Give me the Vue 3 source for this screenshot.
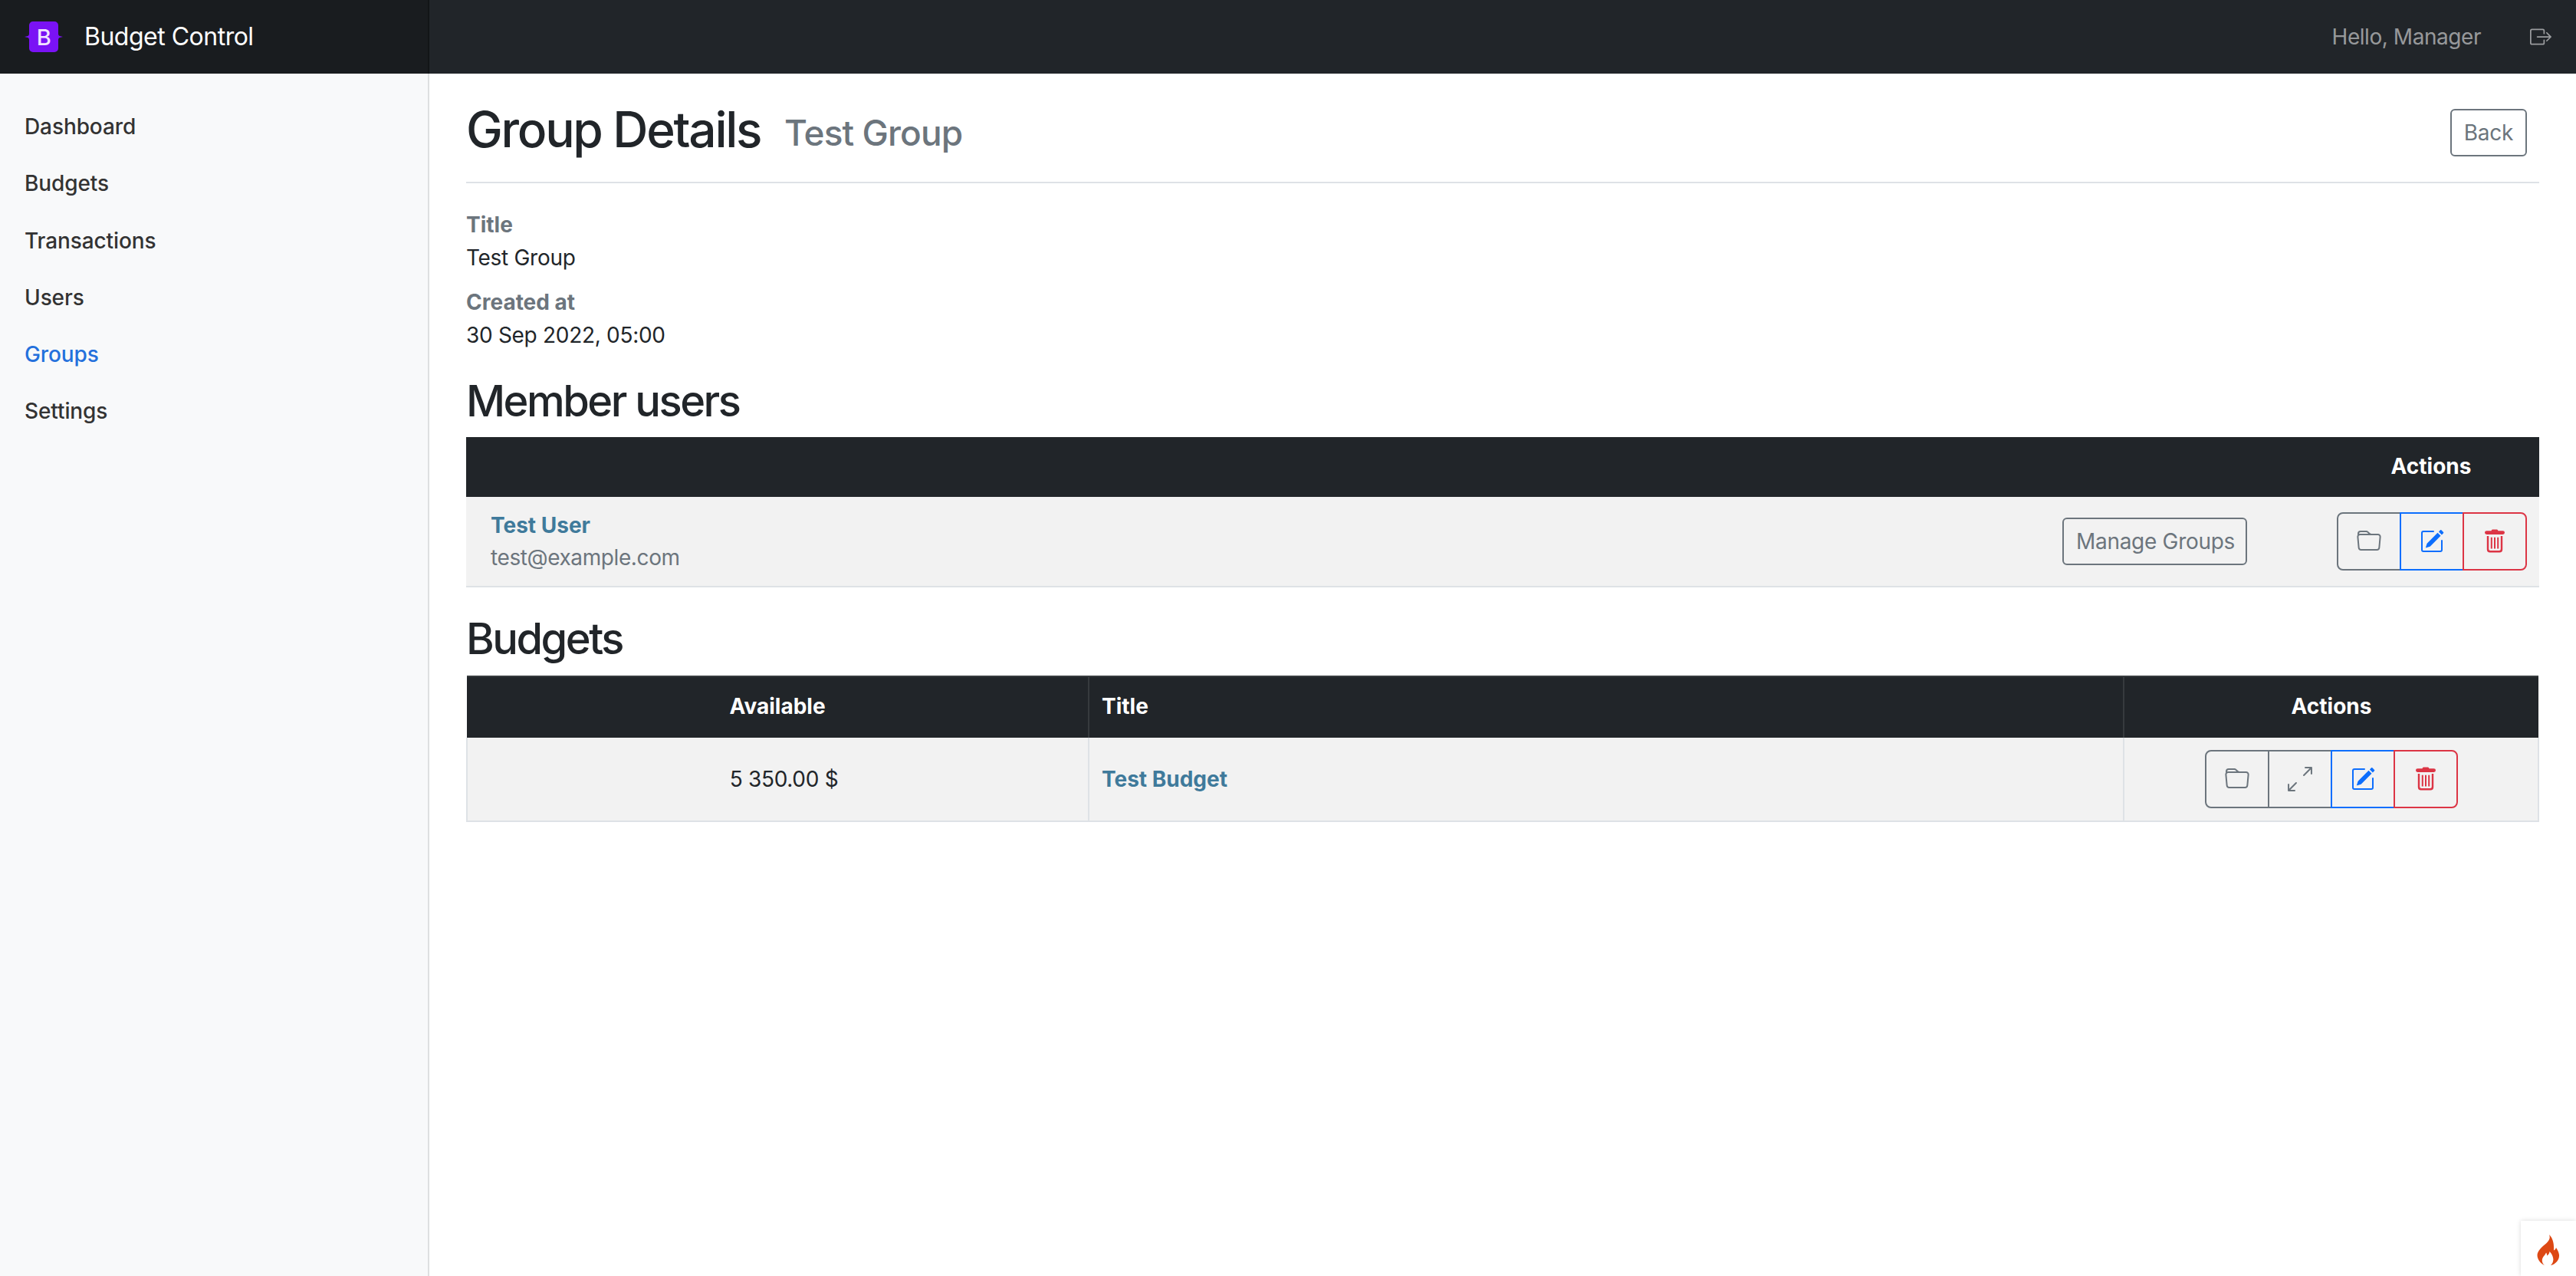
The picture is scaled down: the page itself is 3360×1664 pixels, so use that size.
<script setup>
const navItems = [
  { label: 'Dashboard' },
  { label: 'Budgets' },
  { label: 'Transactions' },
  { label: 'Users' },
  { label: 'Groups', active: true },
  { label: 'Settings' },
]
const folder = 'M.54 3.87.5 3a2 2 0 0 1 2-2h3.672a2 2 0 0 1 1.414.586l.828.828A2 2 0 0 0 9.828 3h3.982a2 2 0 0 1 1.992 2.181l-.637 7A2 2 0 0 1 13.174 14H2.826a2 2 0 0 1-1.991-1.819l-.637-7a1.99 1.99 0 0 1 .342-1.31zM2.19 4a1 1 0 0 0-.996 1.09l.637 7a1 1 0 0 0 .995.91h10.348a1 1 0 0 0 .995-.91l.637-7A1 1 0 0 0 13.81 4H2.19zm4.69-1.707A1 1 0 0 0 6.172 2H2.5a1 1 0 0 0-1 .981l.006.139C1.72 3.042 1.95 3 2.19 3h5.396l-.707-.707z'
const expand = 'M5.828 10.172a.5.5 0 0 0-.707 0l-4.096 4.096V11.5a.5.5 0 0 0-1 0v3.975a.5.5 0 0 0 .5.5H4.5a.5.5 0 0 0 0-1H1.732l4.096-4.096a.5.5 0 0 0 0-.707zm4.344-4.344a.5.5 0 0 0 .707 0l4.096-4.096V4.5a.5.5 0 1 0 1 0V.525a.5.5 0 0 0-.5-.5H11.5a.5.5 0 0 0 0 1h2.768l-4.096 4.096a.5.5 0 0 0 0 .707z'
const pencil = 'M15.502 1.94a.5.5 0 0 1 0 .706L14.459 3.69l-2-2L13.502.646a.5.5 0 0 1 .707 0l1.293 1.293zm-1.75 2.456-2-2L4.939 9.21a.5.5 0 0 0-.121.196l-.805 2.414a.25.25 0 0 0 .316.316l2.414-.805a.5.5 0 0 0 .196-.12l6.813-6.814zM1 13.5A1.5 1.5 0 0 0 2.5 15h11a1.5 1.5 0 0 0 1.5-1.5v-6a.5.5 0 0 0-1 0v6a.5.5 0 0 1-.5.5h-11a.5.5 0 0 1-.5-.5v-11a.5.5 0 0 1 .5-.5H9a.5.5 0 0 0 0-1H2.5A1.5 1.5 0 0 0 1 2.5v11z'
const trash = 'M6.6 .3h2.800a.8.8 0 0 1 .8.8h3.100a1.100 1.100 0 0 1 0 2.400H2.700a1.100 1.100 0 0 1 0-2.400h3.100a.8.8 0 0 1 .8-.8zM2.900 4.500h1.200v8.500a1 1 0 0 0 1 1h5.800a1 1 0 0 0 1-1V4.500h1.200v8.800a2 2 0 0 1-2 2H4.900a2 2 0 0 1-2-2zM5.400 5.400h1v7.400h-1zM7.500 5.400h1v7.400h-1zM9.600 5.400h1v7.400h-1z'
const memberActions = [
  { d: folder, tone: 'grey' },
  { d: pencil, tone: 'blue' },
  { d: trash, tone: 'red' },
]
const budgetActions = [
  { d: folder, tone: 'grey' },
  { d: expand, tone: 'grey' },
  { d: pencil, tone: 'blue' },
  { d: trash, tone: 'red' },
]
</script>

<template>
  <div class="page">
    <header class="topbar">
      <div class="brand">
        <svg class="logo" viewBox="0 0 50 40" aria-hidden="true">
          <path d="M6 5a5 5 0 0 1 5-5h28a5 5 0 0 1 5 5v11c0 2 1 3 3 3.300l3 .7-3 .7c-2 .3-3 1.300-3 3.300v11a5 5 0 0 1-5 5H11a5 5 0 0 1-5-5V24c0-2-1-3-3-3.300L0 20l3-.7c2-.3 3-1.300 3-3.300z" fill="#7a12f5" />
          <text x="25" y="30.500" text-anchor="middle" class="logo-b">B</text>
        </svg>
        <span>Budget Control</span>
      </div>
      <div class="userbox">
        <span class="hello">Hello, Manager</span>
        <svg class="logout" viewBox="0 0 16 16" fill="currentColor" aria-hidden="true">
          <path d="M10 12.5a.5.5 0 0 1-.5.5h-8a.5.5 0 0 1-.5-.5v-9a.5.5 0 0 1 .5-.5h8a.5.5 0 0 1 .5.5v2a.5.5 0 0 0 1 0v-2A1.5 1.5 0 0 0 9.500 2h-8A1.5 1.5 0 0 0 0 3.500v9A1.5 1.5 0 0 0 1.500 14h8a1.5 1.5 0 0 0 1.500-1.500v-2a.5.5 0 0 0-1 0v2z" />
          <path d="M15.854 8.354a.5.5 0 0 0 0-.708l-3-3a.5.5 0 0 0-.708.708L14.293 7.500H5.500a.5.5 0 0 0 0 1h8.793l-2.147 2.146a.5.5 0 0 0 .708.708l3-3z" />
        </svg>
      </div>
    </header>

    <div class="body">
      <nav class="sidebar">
        <a v-for="item in navItems" :key="item.label" class="nav-link" :class="{ active: item.active }">{{ item.label }}</a>
      </nav>

      <main class="content">
        <div class="title-row">
          <h1>Group Details <small>Test Group</small></h1>
          <button class="btn back">Back</button>
        </div>

        <dl class="details">
          <div class="detail">
            <dt>Title</dt>
            <dd>Test Group</dd>
          </div>
          <div class="detail">
            <dt>Created at</dt>
            <dd>30 Sep 2022, 05:00</dd>
          </div>
        </dl>

        <h2>Member users</h2>
        <table class="grid members">
          <thead>
            <tr>
              <th></th>
              <th class="c-manage"></th>
              <th class="c-actions">Actions</th>
            </tr>
          </thead>
          <tbody>
            <tr>
              <td class="who">
                <a class="link">Test User</a>
                <div class="muted">test@example.com</div>
              </td>
              <td class="manage"><button class="btn">Manage Groups</button></td>
              <td class="actions">
                <div class="group">
                  <button v-for="(a, i) in memberActions" :key="i" class="icon-btn" :class="a.tone">
                    <svg viewBox="0 0 16 16" fill="currentColor" aria-hidden="true"><path :d="a.d" /></svg>
                  </button>
                </div>
              </td>
            </tr>
          </tbody>
        </table>

        <h2 class="second">Budgets</h2>
        <table class="grid budgets">
          <thead>
            <tr>
              <th class="c-avail">Available</th>
              <th class="c-title">Title</th>
              <th class="c-bactions">Actions</th>
            </tr>
          </thead>
          <tbody>
            <tr>
              <td class="amount">5 350.00 $</td>
              <td><a class="link">Test Budget</a></td>
              <td class="actions">
                <div class="group">
                  <button v-for="(a, i) in budgetActions" :key="i" class="icon-btn" :class="a.tone">
                    <svg viewBox="0 0 16 16" fill="currentColor" aria-hidden="true"><path :d="a.d" /></svg>
                  </button>
                </div>
              </td>
            </tr>
          </tbody>
        </table>
      </main>
    </div>

    <div class="debug-tab">
      <svg viewBox="0 0 32 40" aria-hidden="true">
        <path fill="#dd4814" d="M16 0c1.500 4 .5 6.500-2 9.500C10 14 3.500 17.500 1 24c-2 6 2.500 13 9 16-3-2.500-4-6-2.500-9.500 1-2.500 3.500-4 4.500-7 1 1.500 1.200 2.500 1 4 2-1 3.500-3 3.500-5.500 2.800 3 6 8 4.500 13-.5 2-1.500 3.500-3 5 6.500-1.500 11.500-7 11-13.500-.3-4-2.500-7-4-9.500-.5 2-1.500 3-3 3.500C22.500 12 21 5 16 0z" />
      </svg>
    </div>
  </div>
</template>

<style>
html, body { margin: 0; background: #fff; }
</style>

<style scoped>
.page {
  position: relative;
  display: flex;
  flex-direction: column;
  min-height: 100vh;
  font-family: Inter, "Noto Sans", sans-serif;
  font-size: 28px;
  line-height: 42px;
  letter-spacing: -0.3px;
  color: #212529;
  overflow: hidden;
}
.topbar {
  display: flex;
  justify-content: space-between;
  align-items: center;
  height: 96px;
  background: #212529;
}
.brand {
  display: flex;
  align-items: center;
  gap: 28px;
  box-sizing: border-box;
  width: 560px;
  height: 100%;
  padding-left: 32px;
  background: #191c1f;
  color: #fff;
  font-size: 32px;
  letter-spacing: -0.5px;
  box-shadow: inset -2px 0 0 rgba(0, 0, 0, 0.25);
}
.logo { width: 50px; height: 40px; flex: none; }
.logo-b { font: 500 29px Inter, sans-serif; fill: #f0e3ff; }
.userbox {
  display: flex;
  align-items: center;
  gap: 64px;
  padding-right: 32px;
  letter-spacing: -0.45px;
  color: rgba(255, 255, 255, 0.55);
}
.logout { width: 28px; height: 28px; }
.body { display: flex; flex: 1; }
.sidebar {
  display: flex;
  flex-direction: column;
  box-sizing: border-box;
  width: 560px;
  flex: none;
  padding-top: 32px;
  background: #f8f9fa;
  box-shadow: inset -2px 0 0 rgba(0, 0, 0, 0.1);
}
.nav-link {
  padding: 16px 32px;
  line-height: 42.3px;
  font-weight: 500;
  letter-spacing: -0.1px;
  color: #333;
}
.nav-link.active { color: #2470dc; }
.content {
  flex: 1;
  min-width: 0;
  padding: 0 48px;
}
.title-row {
  display: flex;
  justify-content: space-between;
  align-items: center;
  box-sizing: border-box;
  height: 143px;
  padding: 8px 16px 0 0;
  border-bottom: 2px solid #dee2e6;
}
h1 {
  margin: 0;
  font-size: 64px;
  font-weight: 500;
  line-height: 77px;
  letter-spacing: -2.3px;
}
h1 small {
  margin-left: 16px;
  font-size: 46px;
  font-weight: 500;
  letter-spacing: -0.9px;
  vertical-align: 2px;
  color: #6c757d;
}
.btn {
  box-sizing: border-box;
  height: 62px;
  padding: 0 14px 0 16px;
  background: transparent;
  border: 2px solid #6c757d;
  border-radius: 6px;
  color: #6c757d;
  font: inherit;
  letter-spacing: inherit;
}
.btn.back { margin-top: 5px; padding: 0 16px; }
.details { margin: 33px 0 0; }
.detail { margin-bottom: 16px; }
.detail:last-child { margin-bottom: 0; }
dt { font-weight: 700; color: #6c757d; margin-bottom: 1px; letter-spacing: 0; }
dd { margin: 0; }
h2 {
  margin: 32px 0 13px;
  font-size: 56px;
  font-weight: 500;
  line-height: 67px;
  letter-spacing: -2.5px;
}
h2.second { margin: 34px 0 14px; }
.grid {
  width: 100%;
  table-layout: fixed;
  border-collapse: collapse;
}
.grid th {
  height: 78px;
  padding: 0 16px 3px;
  background: #212529;
  color: #fff;
  font-weight: 700;
  letter-spacing: 0;
  text-align: center;
  box-sizing: border-box;
}
.grid td {
  padding: 16px;
  background: #f2f2f2;
  border-bottom: 2px solid #dee2e6;
}
.grid td.who { padding-left: 32px; }
.c-manage { width: 360px; }
.c-actions { width: 278px; }
.grid th.c-actions, .members td.actions { padding-left: 14px; padding-right: 18px; }
.manage { text-align: left; }
.actions { text-align: center; }
.link {
  display: block;
  font-weight: 700;
  letter-spacing: 0;
  color: #3f7a9b;
}
.muted { color: #6c757d; letter-spacing: -0.4px; }
.group {
  display: inline-flex;
  vertical-align: middle;
}
.icon-btn {
  position: relative;
  display: flex;
  align-items: center;
  justify-content: center;
  box-sizing: border-box;
  width: 84px;
  height: 76px;
  margin-left: -2px;
  padding: 0;
  background: transparent;
  border: 2px solid currentColor;
}
.icon-btn:first-child { margin-left: 0; border-radius: 8px 0 0 8px; }
.icon-btn:last-child { border-radius: 0 8px 8px 0; }
.icon-btn svg { width: 32px; height: 32px; }
.grey { color: #6c757d; }
.blue { color: #0d6efd; z-index: 1; }
.red { color: #dc3545; z-index: 2; }
.budgets th { height: 80px; border-top: 2px solid #373b3e; }
.budgets th + th { border-left: 2px solid #373b3e; }
.budgets td { border: 2px solid #dee2e6; border-top: 0; }
.c-avail { width: 811px; }
.c-bactions { width: 541px; }
.budgets th.c-title { text-align: left; }
.amount { text-align: center; padding-left: 32px !important; }
.debug-tab {
  position: absolute;
  right: 0;
  bottom: 0;
  display: flex;
  align-items: center;
  justify-content: center;
  box-sizing: border-box;
  width: 72px;
  height: 72px;
  padding: 4px 0 0 2px;
  background: #fff;
  box-shadow: 0 0 6px rgba(0, 0, 0, 0.15);
}
.debug-tab svg { width: 32px; height: 40px; }
</style>
